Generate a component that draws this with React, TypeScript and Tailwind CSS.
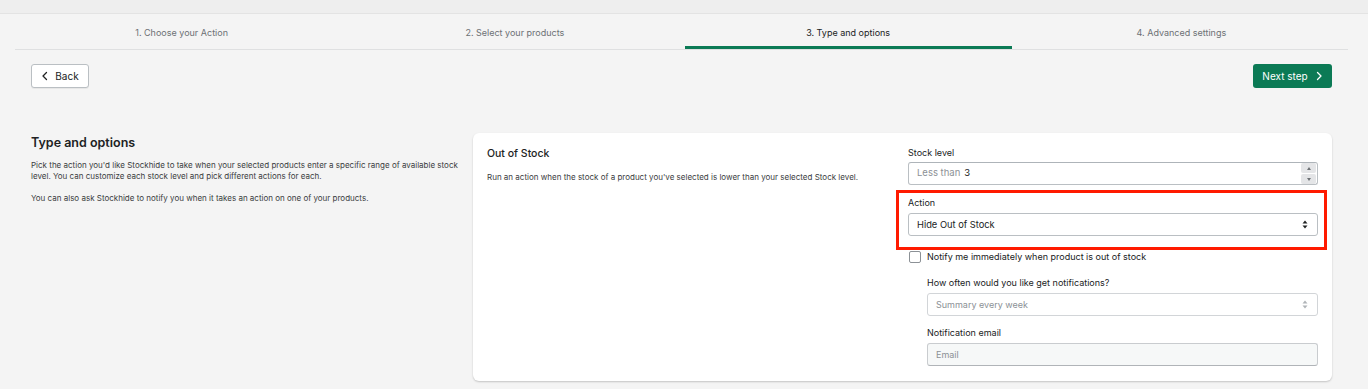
import React from "react";

const font = { fontFamily: "Inter, 'Noto Sans', Arial, sans-serif" };

function ChevronLeft() {
  return (
    <svg width="8" height="10" viewBox="0 0 8 10" fill="none">
      <path d="M5.5 1.5 L2 5 L5.5 8.5" stroke="#202223" strokeWidth="1.3" strokeLinecap="round" strokeLinejoin="round" />
    </svg>
  );
}
function ChevronRight() {
  return (
    <svg width="8" height="10" viewBox="0 0 8 10" fill="none">
      <path d="M2.5 1.5 L6 5 L2.5 8.5" stroke="#ffffff" strokeWidth="1.3" strokeLinecap="round" strokeLinejoin="round" />
    </svg>
  );
}
function UpDown({ color = "#5c5f62" }: { color?: string }) {
  return (
    <svg width="6" height="9" viewBox="0 0 6 9">
      <path d="M3 0.5 L5.5 3.5 H0.5 Z" fill={color} />
      <path d="M3 8.5 L5.5 5.5 H0.5 Z" fill={color} />
    </svg>
  );
}

const tabs = ["1. Choose your Action", "2. Select your products", "3. Type and options", "4. Advanced settings"];

export default function App() {
  return (
    <div className="w-[1368px] h-[389px] bg-[#f4f4f4] overflow-hidden text-[#202223]" style={font}>
      <div className="h-[14px] bg-[#eeeeee] border-b border-[#e3e3e3]" />
      <div className="px-[15px] pr-[20px]">
        <div className="flex border-b border-[#dfe0e1]">
          {tabs.map((t, i) => (
            <div key={t} className="flex-1 flex justify-center">
              <div
                className={
                  "w-full text-center text-[9px] h-[35px] pt-[12px] " +
                  (i === 2 ? "text-[#202223] border-b-[3px] border-[#0b7a55] mx-[3px]" : "text-[#6d7175]")
                }
              >
                {t}
              </div>
            </div>
          ))}
        </div>
      </div>
      <div className="flex justify-between px-[31px] pr-[36px] mt-[14px]">
        <button className="h-[24px] w-[58px] bg-white border border-[#babfc3] rounded-[3px] flex items-center justify-center gap-[6px] text-[10px] shadow-[0_1px_0_rgba(0,0,0,0.05)]">
          <ChevronLeft />
          <span>Back</span>
        </button>
        <button className="h-[24px] w-[79px] bg-[#0b7a55] rounded-[3px] flex items-center justify-center gap-[7px] text-[10px] text-white">
          <span>Next step</span>
          <ChevronRight />
        </button>
      </div>
      <div className="flex px-[31px] pr-[36px] mt-[45px]">
        <div className="w-[442px] pt-[2px]">
          <h2 className="text-[12.5px] font-semibold leading-[16px]">Type and options</h2>
          <p className="text-[8px] leading-[11px] text-[#3a3c3e] mt-[9px] pr-[4px]">
            Pick the action you'd like Stockhide to take when your selected products enter a specific range of available stock level. You can customize each stock level and pick different actions for each.
          </p>
          <p className="text-[8px] leading-[11px] text-[#3a3c3e] mt-[11px]">
            You can also ask Stockhide to notify you when it takes an action on one of your products.
          </p>
        </div>
        <div className="flex-1 bg-white rounded-[6px] shadow-[0_1px_2px_rgba(0,0,0,0.2)] flex px-[14px] pt-[14px] pb-[14px] h-[248px]">
          <div className="w-[421px]">
            <div className="text-[10.5px] font-medium leading-[14px]">Out of Stock</div>
            <div className="text-[8px] text-[#3a3c3e] mt-[11px] leading-[11px]">
              Run an action when the stock of a product you've selected is lower than your selected Stock level.
            </div>
          </div>
          <div className="flex-1 flex flex-col">
            <div className="text-[9px] leading-[12px]">Stock level</div>
            <div className="mt-[3px] h-[23px] border border-[#babfc3] border-t-[#aeb4b9] rounded-[3px] flex items-center pl-[8px] pr-[1px] text-[9.5px]">
              <span className="text-[#8c9196]">Less than</span>
              <span className="ml-[4px] text-[#202223]">3</span>
              <div className="ml-auto flex flex-col gap-[1px]">
                <div className="w-[15px] h-[10px] bg-[#e4e5e7] rounded-[2px] flex items-center justify-center">
                  <svg width="4" height="3" viewBox="0 0 4 3"><path d="M2 0 L4 3 H0 Z" fill="#6d7175" /></svg>
                </div>
                <div className="w-[15px] h-[10px] bg-[#e4e5e7] rounded-[2px] flex items-center justify-center">
                  <svg width="4" height="3" viewBox="0 0 4 3"><path d="M2 3 L4 0 H0 Z" fill="#6d7175" /></svg>
                </div>
              </div>
            </div>
            <div className="mt-[5px] ml-[-12px] mr-[-9px] border-[3px] border-[#ff1a00] pl-[9px] pr-[6px] pt-[4px] pb-[11px]">
              <div className="text-[9px] leading-[12px]">Action</div>
              <div className="mt-[4px] h-[23px] border border-[#babfc3] rounded-[3px] flex items-center px-[8px] text-[9.3px] text-[#202223]">
                <span>Hide Out of Stock</span>
                <span className="ml-auto mr-[1px] flex"><UpDown color="#202223" /></span>
              </div>
            </div>
            <div className="flex items-center mt-[1px] h-[12px]">
              <div className="w-[12px] h-[12px] border border-[#8c9196] rounded-[2px] bg-white ml-[1px]" />
              <span className="ml-[6px] text-[9px]">Notify me immediately when product is out of stock</span>
            </div>
            <div className="pl-[19px]">
              <div className="text-[9px] leading-[12px] mt-[14px]">How often would you like get notifications?</div>
              <div className="mt-[4px] h-[23px] border border-[#d2d5d8] rounded-[3px] flex items-center px-[8px] text-[9px] text-[#8c9196]">
                <span>Summary every week</span>
                <span className="ml-auto mr-[1px] flex"><UpDown color="#b0b4b8" /></span>
              </div>
              <div className="text-[9px] leading-[12px] mt-[11px]">Notification email</div>
              <div className="mt-[4px] h-[23px] border border-[#c9cccf] border-b-[#b0b4b8] rounded-[3px] bg-[#f6f8f8] flex items-center px-[8px] text-[9px] text-[#8c9196]">
                Email
              </div>
            </div>
          </div>
        </div>
      </div>
    </div>
  );
}
